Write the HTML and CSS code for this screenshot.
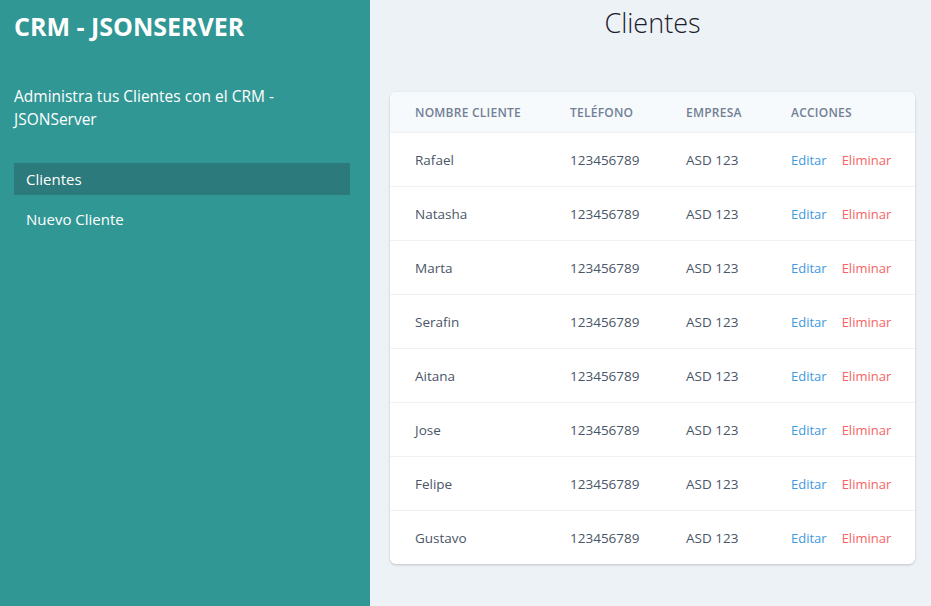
FILE: index.html
```html
<!DOCTYPE html>
<html lang="es">
<head>
<meta charset="utf-8">
<title>CRM - JSONSERVER</title>
<link rel="stylesheet" href="styles.css">
</head>
<body>
<div class="layout">
  <aside class="sidebar">
    <h1 class="brand">CRM - JSONSERVER</h1>
    <p class="desc">Administra tus Clientes con el CRM - JSONServer</p>
    <nav class="nav">
      <a class="nav-item active" href="#">Clientes</a>
      <a class="nav-item" href="#">Nuevo Cliente</a>
    </nav>
  </aside>
  <main class="main">
    <h2 class="page-title">Clientes</h2>
    <div class="card">
      <table class="table">
        <thead>
          <tr>
            <th class="c1">Nombre Cliente</th>
            <th class="c2">Teléfono</th>
            <th class="c3">Empresa</th>
            <th class="c4">Acciones</th>
          </tr>
        </thead>
        <tbody>
          <tr><td>Rafael</td><td>123456789</td><td>ASD 123</td><td><a class="edit" href="#">Editar</a><a class="del" href="#">Eliminar</a></td></tr>
          <tr><td>Natasha</td><td>123456789</td><td>ASD 123</td><td><a class="edit" href="#">Editar</a><a class="del" href="#">Eliminar</a></td></tr>
          <tr><td>Marta</td><td>123456789</td><td>ASD 123</td><td><a class="edit" href="#">Editar</a><a class="del" href="#">Eliminar</a></td></tr>
          <tr><td>Serafin</td><td>123456789</td><td>ASD 123</td><td><a class="edit" href="#">Editar</a><a class="del" href="#">Eliminar</a></td></tr>
          <tr><td>Aitana</td><td>123456789</td><td>ASD 123</td><td><a class="edit" href="#">Editar</a><a class="del" href="#">Eliminar</a></td></tr>
          <tr><td>Jose</td><td>123456789</td><td>ASD 123</td><td><a class="edit" href="#">Editar</a><a class="del" href="#">Eliminar</a></td></tr>
          <tr><td>Felipe</td><td>123456789</td><td>ASD 123</td><td><a class="edit" href="#">Editar</a><a class="del" href="#">Eliminar</a></td></tr>
          <tr><td>Gustavo</td><td>123456789</td><td>ASD 123</td><td><a class="edit" href="#">Editar</a><a class="del" href="#">Eliminar</a></td></tr>
        </tbody>
      </table>
    </div>
  </main>
</div>
</body>
</html>
```
FILE: styles.css
```css
* { box-sizing: border-box; }
html, body { margin: 0; padding: 0; height: 100%; }
body {
  font-family: "Open Sans", "Noto Sans", sans-serif;
  background: #edf2f7;
  color: #4a5568;
}
.layout { display: flex; height: 606px; }
.sidebar {
  width: 370px;
  flex: none;
  background: #319795;
  color: #fff;
  padding: 10px 20px 0 14px;
}
.brand {
  margin: 0;
  font-size: 25px;
  line-height: 32px;
  font-weight: 700;
  letter-spacing: 0;
}
.desc {
  margin: 43px 0 0;
  font-size: 15.5px;
  line-height: 23px;
}
.nav { margin-top: 32px; display: flex; flex-direction: column; gap: 8px; }
.nav-item {
  display: block;
  height: 32px;
  line-height: 32px;
  padding: 0 12px;
  color: #fff;
  text-decoration: none;
  font-size: 15px;
}
.nav-item.active { background: #2c7a7b; }
.main {
  flex: 1;
  padding: 0 16px 0 20px;
}
.page-title {
  margin: 0;
  text-align: center;
  font-weight: 300;
  font-size: 27px;
  line-height: 46px;
  color: #1a202c;
}
.card {
  margin-top: 46px;
  background: #fff;
  border-radius: 6px;
  box-shadow: 0 1px 3px rgba(0,0,0,0.12), 0 1px 2px rgba(0,0,0,0.08);
  overflow: hidden;
}
.table { width: 100%; border-collapse: collapse; }
.table th {
  background: #f7fafc;
  height: 40px;
  padding: 1px 0 0 25px;
  text-align: left;
  text-transform: uppercase;
  font-size: 12px;
  font-weight: 600;
  color: #718096;
  letter-spacing: 0.02em;
  border-bottom: 1px solid #edf2f7;
}
.c1 { width: 155px; }
.c2 { width: 116px; }
.c3 { width: 105px; }
.table td {
  height: 54px;
  padding: 1px 0 0 25px;
  font-size: 13.5px;
  color: #4a5568;
  border-bottom: 1px solid #edf2f7;
}
.table tbody tr:last-child td { border-bottom: 0; }
.edit, .del { text-decoration: none; font-size: 13px; }
.edit { color: #4299e1; margin-right: 15px; }
.del { color: #f56565; }
```
